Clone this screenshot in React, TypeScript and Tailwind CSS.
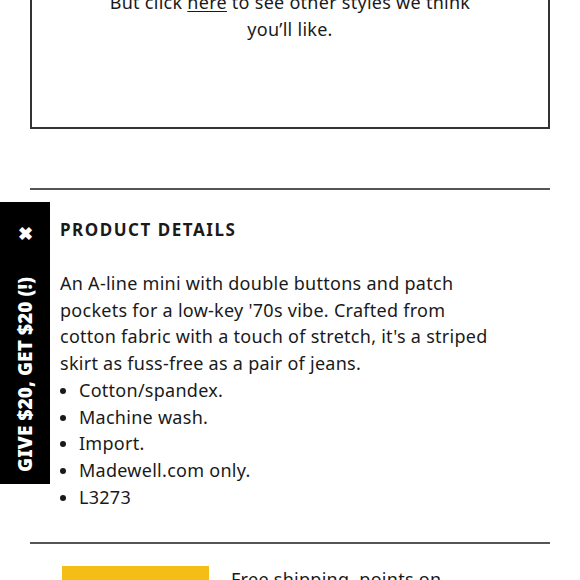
import React from "react";

const font = { fontFamily: "'Noto Sans', 'Lato', sans-serif" };

const bullets = ["Cotton/spandex.", "Machine wash.", "Import.", "Madewell.com only.", "L3273"];

export default function App() {
  return (
    <div className="relative h-[580px] w-[580px] overflow-hidden bg-white text-[#1a1a1a]" style={font}>
      <div className="mx-[30px] -mt-[40px] border-2 border-[#333] px-4 pt-[27px] pb-[84px] text-center text-[18px] leading-[27px] tracking-[0.015em]">
        <p>
          But click <span className="underline underline-offset-2">here</span> to see other styles we think
          <br />
          you’ll like.
        </p>
      </div>

      <div className="mx-[30px] mt-[59px] border-t-2 border-[#555]" />

      <div className="w-[540px] pl-[60px] pt-[29px]">
        <h3 className="text-[17px] font-bold leading-[22px] tracking-[0.09em]">PRODUCT DETAILS</h3>
        <p className="mt-[29px] text-[18px] leading-[26.7px] tracking-[0.015em]">
          An A-line mini with double buttons and patch
          <br />
          pockets for a low-key '70s vibe. Crafted from
          <br />
          cotton fabric with a touch of stretch, it's a striped
          <br />
          skirt as fuss-free as a pair of jeans.
        </p>
        <ul className="list-disc pl-[19px] text-[18px] leading-[26.7px] tracking-[0.015em]">
          {bullets.map((b) => (
            <li key={b}>{b}</li>
          ))}
        </ul>
      </div>

      <div className="mx-[30px] mt-[32px] border-t-2 border-[#555]" />

      <div className="flex gap-[22px] pl-[62px] pt-[22px]">
        <div className="h-[60px] w-[147px] bg-[#f5be16]" />
        <p className="text-[18px] leading-[26px] tracking-[0.015em]">Free shipping, points on</p>
      </div>

      <div className="absolute left-0 top-[202px] flex h-[282px] w-[50px] flex-col items-center bg-black text-white">
        <span className="mt-[22px] text-[18px] font-bold leading-none">✖</span>
        <span
          className="mt-auto mb-[12px] whitespace-nowrap text-[19px] font-black tracking-[0.005em]"
          style={{ writingMode: "vertical-rl", transform: "rotate(180deg)" }}
        >
          GIVE $20, GET $20 (!)
        </span>
      </div>
    </div>
  );
}
